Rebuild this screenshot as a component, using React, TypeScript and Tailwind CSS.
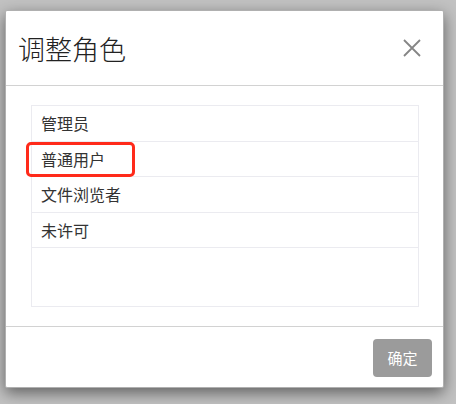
const ROLES = ["管理员", "普通用户", "文件浏览者", "未许可"];

export default function App() {
  return (
    <div
      className="h-[404px] w-[456px] overflow-hidden bg-[#c2c2c2] pl-[5px] pt-[10px]"
      style={{ fontFamily: '"Noto Sans CJK SC", "Noto Sans", sans-serif' }}
    >
      <div className="relative flex h-[378px] w-[439px] flex-col rounded-[2px] border border-[#b0b0b0] bg-white shadow-[0_5px_15px_rgba(0,0,0,0.5)]">
        <div className="flex h-[75px] shrink-0 items-center justify-between border-b border-[#d2d2d2] pl-[12px] pr-[22px]">
          <h2 className="text-[27px] font-light leading-none text-[#222]">调整角色</h2>
          <button type="button" className="text-[#858585]" aria-label="关闭">
            <svg width="18" height="18" viewBox="0 0 18 18" fill="none" stroke="currentColor" strokeWidth="1.8">
              <path d="M1 1 L17 17 M17 1 L1 17" />
            </svg>
          </button>
        </div>

        <div className="flex-1 pl-[25px] pr-[24px] pt-[19px] pb-[19px]">
          <ul className="h-[202px] border border-[#ebebf0]">
            {ROLES.map((role) => (
              <li
                key={role}
                className="flex h-[35.5px] items-center border-b border-[#ebebf0] pl-[9px] text-[16px] text-[#333]"
              >
                {role}
              </li>
            ))}
          </ul>
        </div>

        <div className="flex h-[61px] shrink-0 items-start justify-end border-t border-[#d2d2d2] pr-[11px] pt-[12px]">
          <button
            type="button"
            className="h-[38px] w-[59px] rounded-[4px] bg-[#9b9b9b] text-[15px] text-white"
          >
            确定
          </button>
        </div>

        <div className="pointer-events-none absolute left-[20px] top-[131px] h-[35px] w-[109px] rounded-[5px] border-[3px] border-[#ff2a1a]" />
      </div>
    </div>
  );
}
